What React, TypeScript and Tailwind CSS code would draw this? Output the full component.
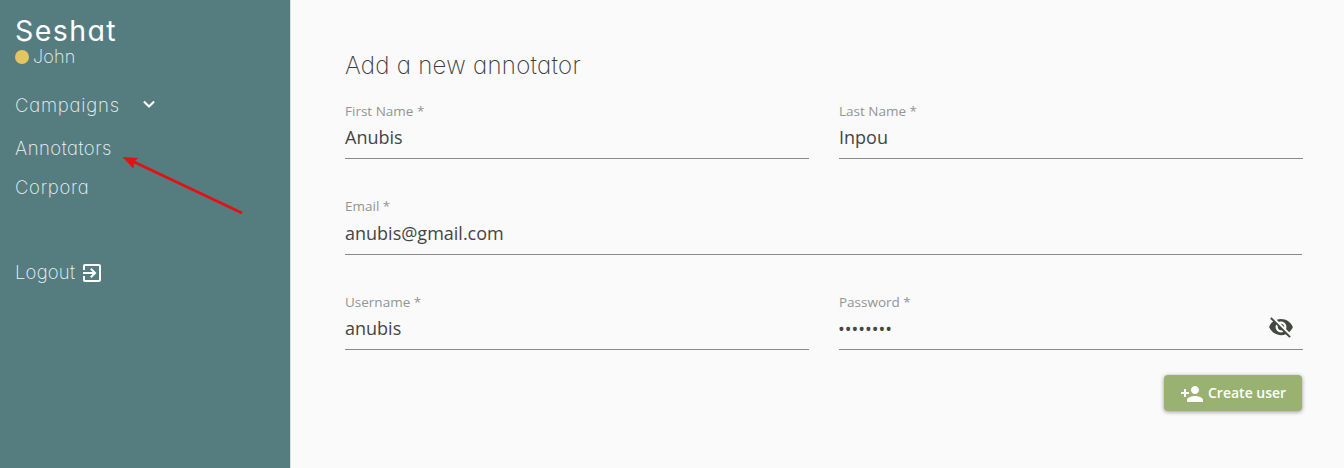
import type { ReactNode } from 'react';

const display = "font-['Inter',sans-serif] [font-feature-settings:'cv11']";

function Field({ label, children, className = '', labelClass = 'pt-px' }: { label: string; children: ReactNode; className?: string; labelClass?: string }) {
  return (
    <div className={`flex h-[58px] flex-col border-b border-[#8a8a8a] ${className}`}>
      <label className={`h-5 self-start whitespace-nowrap text-[13.5px] leading-[19px] text-[#949494] ${labelClass}`}>{label}</label>
      <div className="mt-[2px] flex h-7 items-center justify-between text-[18px] leading-7 text-[#454545]">{children}</div>
    </div>
  );
}

function NavItem({ text, className = '', textClass = '', children }: { text: string; className?: string; textClass?: string; children?: ReactNode }) {
  return (
    <a className={`flex h-6 items-center text-[18.5px] font-extralight leading-6 text-[#eef3f3] ${display} ${className}`}>
      <span className={`-mt-[2px] ${textClass}`}>{text}</span>
      {children}
    </a>
  );
}

export default function App() {
  return (
    <div className="relative flex h-[468px] w-[1344px] overflow-hidden bg-[#fafafa] font-['Open_Sans',sans-serif]">
      <aside className="flex w-[291px] shrink-0 flex-col border-r border-[#dedede] bg-[#557d80] pl-[15px]">
        <div className={`mt-[15px] h-8 self-start text-[28.5px] font-normal leading-8 tracking-[1.4px] text-white ${display}`}>Seshat</div>
        <div className={`flex h-5 items-center text-[18px] font-extralight leading-5 text-[#eef3f3] ${display}`}>
          <span className="mr-1 h-[14px] w-[14px] rounded-full bg-[#e5c561]" />
          <span className="tracking-[0.2px]">John</span>
        </div>
        <NavItem text="Campaigns" textClass="w-[104px] tracking-[0.8px]" className="mt-[27px]">
          <svg className="ml-[24px] -mt-[4px] h-3 w-3" viewBox="0 0 12 12" fill="none" stroke="white" strokeWidth="2.1">
            <path d="M.9 3.4 6 8.5l5.1-5.1" />
          </svg>
        </NavItem>
        <NavItem text="Annotators" textClass="tracking-[0.5px]" className="mt-[19px]" />
        <NavItem text="Corpora" textClass="tracking-[0.7px]" className="mt-[15px]" />
        <NavItem text="Logout" textClass="w-[60px] tracking-[0.2px]" className="mt-[61px]">
          <svg className="ml-[5px] h-6 w-6" viewBox="0 0 24 24" fill="white">
            <path d="M10.090 15.590 11.500 17l5-5-5-5-1.410 1.410L12.670 11H3v2h9.670l-2.580 2.590zM19 3H5c-1.110 0-2 .9-2 2v4h2V5h14v14H5v-4H3v4c0 1.100.89 2 2 2h14c1.100 0 2-.9 2-2V5c0-1.100-.9-2-2-2z" />
          </svg>
        </NavItem>
      </aside>

      <main className="flex w-[1012px] flex-col pl-[54px] pt-[50px]">
        <h1 className={`h-8 self-start whitespace-nowrap text-[24px] font-extralight leading-8 tracking-[0.27px] text-[#3c3c3c] ${display}`}>Add a new annotator</h1>
        <form className="mt-[19px] flex flex-col">
          <div className="grid grid-cols-2 gap-[30px]">
            <Field label="First Name *">Anubis</Field>
            <Field label="Last Name *">Inpou</Field>
          </div>
          <Field label="Email *" labelClass="" className="mr-px mt-[38px]">anubis@gmail.com</Field>
          <div className="mt-[37px] grid grid-cols-2 gap-[30px]">
            <Field label="Username *">anubis</Field>
            <Field label="Password *">
              <span className="-ml-px mt-px">••••••••</span>
              <svg className="mr-[9px] -mt-[2px] h-[26px] w-[26px]" viewBox="0 0 24 24" fill="#454842">
                <path d="M12 7c2.760 0 5 2.240 5 5 0 .65-.13 1.260-.36 1.830l2.920 2.920c1.510-1.260 2.700-2.890 3.430-4.750-1.730-4.390-6-7.500-11-7.500-1.400 0-2.740.25-3.980.7l2.160 2.160C10.740 7.130 11.350 7 12 7zM2 4.270l2.280 2.280.46.46C3.080 8.300 1.780 10.020 1 12c1.730 4.390 6 7.500 11 7.500 1.550 0 3.030-.3 4.380-.84l.42.42L19.730 22 21 20.730 3.270 3 2 4.270zM7.530 9.800l1.550 1.550c-.05.21-.08.43-.08.65 0 1.660 1.340 3 3 3 .22 0 .44-.03.65-.08l1.550 1.550c-.67.33-1.410.53-2.200.53-2.760 0-5-2.240-5-5 0-.79.2-1.530.53-2.200zm4.310-.78 3.150 3.150.02-.16c0-1.660-1.340-3-3-3l-.17.01z" />
              </svg>
            </Field>
          </div>
          <button type="button" className="mr-px mt-[25px] flex h-9 w-[138px] items-center self-end rounded-[4px] bg-[#99b272] pl-4 text-[14px] font-semibold text-white shadow-[0_1px_4px_rgba(0,0,0,0.4)]">
            <svg className="mt-px h-6 w-6 shrink-0" viewBox="0 0 24 24" fill="white">
              <path d="M15 12c2.210 0 4-1.790 4-4s-1.790-4-4-4-4 1.790-4 4 1.790 4 4 4zm-9-2V7H4v3H1v2h3v3h2v-3h3v-2H6zm9 4c-2.670 0-8 1.340-8 4v2h16v-2c0-2.660-5.330-4-8-4z" />
            </svg>
            <span className="-mt-[2px] ml-1 whitespace-nowrap">Create user</span>
          </button>
        </form>
      </main>

      <svg className="absolute left-[120px] top-[150px] h-[68px] w-[126px]" viewBox="120 150 126 68">
        <path d="m131 160.500 111 52.500" stroke="#e31212" strokeWidth="2.800" />
        <path d="m122.500 157 15.700 1.100-4.200 4.200-.5 6.500z" fill="#e31212" />
      </svg>
    </div>
  );
}
